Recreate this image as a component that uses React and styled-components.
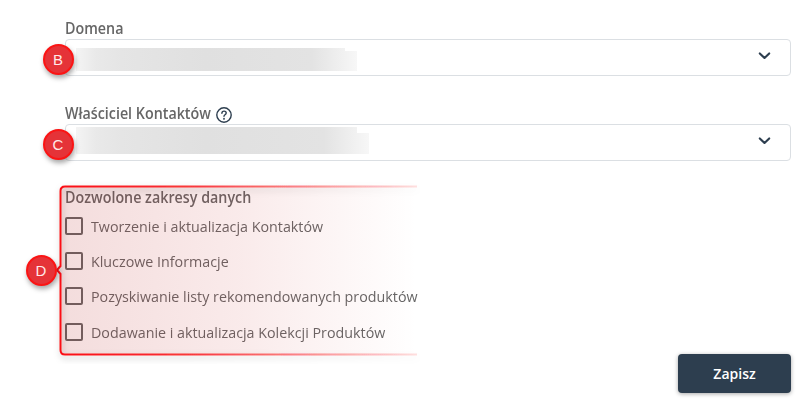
import React from 'react';
import styled, {createGlobalStyle} from 'styled-components'

const GlobalStyle = createGlobalStyle`
  * {
    box-sizing: border-box;
  }
  body {
    margin: 0;
    background: #fff;
    font-family: 'Open Sans', sans-serif;
    overflow: hidden;
  }
`

const Form = styled.form`
  width: 811px;
  height: 407px;
  padding: 18px 20px 0 65px;
  display: flex;
  flex-direction: column;
`

const Field = styled.div`
  height: ${props => props.height}px;
`

const Label = styled.div`
  height: 21px;
  display: flex;
  align-items: center;
  gap: 5px;
  font-size: 15.3px;
  line-height: 20px;
  font-weight: 600;
  color: #666;
  white-space: nowrap;
`

const LabelText = styled.span`
  display: block;
  width: ${props => props.width}px;
  margin-top: -1px;
  transform: scaleX(0.934);
  transform-origin: left;
`

const HelpIcon = styled.svg`
  width: 16px;
  height: 16px;
  margin-top: 2px;
`

const Select = styled.div`
  position: relative;
  width: 726px;
  height: 37px;
  border: 1px solid #dbdfe3;
  border-radius: 4px;
  display: flex;
  align-items: center;
  justify-content: space-between;
  padding-right: 19px;
`

const Masked = styled.div`
  margin-left: 10px;
  height: ${props => props.height}px;
  width: ${props => props.width}px;
  margin-top: ${props => props.shift}px;
  background: linear-gradient(90deg, #f4f4f4 0, #e9e9e9 20px, #e5e5e5 45px, #e0e0e0 130px, #e3e3e3 ${props => props.width - 45}px, #f7f7f7 100%);
  clip-path: polygon(0 0, calc(100% - 12px) 0, calc(100% - 12px) ${props => props.step}px, 100% ${props => props.step}px, 100% 100%, 0 100%);
`

const Chevron = styled.svg`
  width: 13px;
  height: 8px;
  margin-top: -3px;
`

const Marker = styled.div`
  position: absolute;
  left: ${props => props.x}px;
  top: ${props => props.y}px;
  width: 31px;
  height: 31px;
  border: 2px solid #fb1414;
  border-radius: 50%;
  background: #e53338;
  box-shadow: 1px 3px 5px rgba(0, 0, 0, 0.35);
  display: flex;
  align-items: center;
  justify-content: center;
  font-family: 'Liberation Sans', sans-serif;
  font-size: 15px;
  color: #ffe9e9;
`

const Scopes = styled.div`
  position: relative;
`

const ScopeTitle = styled(Label)`
  height: 20px;
  margin-bottom: 10px;
`

const Scope = styled.label`
  height: 18px;
  margin-bottom: 17.2px;
  display: flex;
  align-items: center;
  gap: 8px;
  font-size: 15.3px;
  color: #666;
  white-space: nowrap;
`

const ScopeText = styled.span`
  line-height: 20px;
  transform: scaleX(0.934);
  transform-origin: left;
`

const Checkbox = styled.input`
  appearance: none;
  width: 18px;
  height: 18px;
  margin: 0;
  border: 2px solid #666;
  border-radius: 2px;
`

const Callout = styled.svg`
  position: absolute;
  left: -15px;
  top: -9px;
  width: 370px;
  height: 186px;
  pointer-events: none;
`

const Save = styled.button`
  position: relative;
  align-self: flex-end;
  flex-shrink: 0;
  width: 113px;
  height: 39px;
  margin-top: -4px;
  border: 0;
  border-radius: 4px;
  background: #2d3e4f;
  box-shadow: 0 1px 4px rgba(0, 0, 0, 0.35);
  color: #fff;
  font-family: 'Open Sans', sans-serif;
  font-size: 14px;
  font-weight: 600;
`

const scopes = [
  'Tworzenie i aktualizacja Kontaktów',
  'Kluczowe Informacje',
  'Pozyskiwanie listy rekomendowanych produktów',
  'Dodawanie i aktualizacja Kolekcji Produktów',
]

function ChevronDown() {
  return (
      <Chevron viewBox="0 0 13 8" fill="none" stroke="#2d3e4f" strokeWidth="2.1" strokeLinecap="round" strokeLinejoin="round">
        <path d="M1.8 1.4 L6.5 6 L11.2 1.4"/>
      </Chevron>
  )
}

function Help() {
  return (
      <HelpIcon viewBox="0 0 16 16" fill="none" stroke="#2d3e4f" strokeWidth="1.4" strokeLinecap="round">
        <circle cx="8" cy="8" r="7.2"/>
        <path d="M5.9 6.2 C6 3.4 10.2 3.5 10.2 6.1 C10.2 7.7 8 7.8 8 9.2"/>
        <circle cx="8" cy="11.7" r="0.35"/>
      </HelpIcon>
  )
}

function Bracket() {
  return (
      <Callout viewBox="0 0 370 186">
        <defs>
          <linearGradient id="line" gradientUnits="userSpaceOnUse" x1="10" y1="0" x2="367" y2="0">
            <stop offset="0" stopColor="#fb1014"/>
            <stop offset="0.35" stopColor="#f91418" stopOpacity="0.85"/>
            <stop offset="1" stopColor="#f91418" stopOpacity="0.12"/>
          </linearGradient>
          <linearGradient id="fill" gradientUnits="userSpaceOnUse" x1="10" y1="0" x2="367" y2="0">
            <stop offset="0" stopColor="#b82828" stopOpacity="0.16"/>
            <stop offset="0.5" stopColor="#c83030" stopOpacity="0.1"/>
            <stop offset="1" stopColor="#d43030" stopOpacity="0"/>
          </linearGradient>
          <filter id="shade" x="-10%" y="-10%" width="120%" height="125%">
            <feDropShadow dx="1" dy="3" stdDeviation="3" floodColor="#000" floodOpacity="0.25"/>
          </filter>
        </defs>
        <path d="M367 8.5 H15 Q10.5 8.5 10.5 13 V88 L7 92 L10.5 96 V172 Q10.5 176.5 15 176.5 H367 Z" fill="url(#fill)"/>
        <path d="M367 8.5 H15 Q10.5 8.5 10.5 13 V88 L7 92 L10.5 96 V172 Q10.5 176.5 15 176.5 H367" fill="none" stroke="url(#line)" strokeWidth="2" filter="url(#shade)"/>
      </Callout>
  )
}

function App() {
  return (
      <Form>
        <GlobalStyle/>
        <Field height={85}>
          <Label><LabelText width={59}>Domena</LabelText></Label>
          <Select>
            <Masked width={281} height={23} step={3} shift={4}/>
            <ChevronDown/>
            <Marker x={-23.5} y={3.5}>B</Marker>
          </Select>
        </Field>
        <Field height={84}>
          <Label><LabelText width={146}>Właściciel Kontaktów</LabelText><Help/></Label>
          <Select>
            <Masked width={293} height={27} step={6} shift={-4}/>
            <ChevronDown/>
            <Marker x={-23.5} y={3.5}>C</Marker>
          </Select>
        </Field>
        <Scopes>
          <ScopeTitle><LabelText width={186}>Dozwolone zakresy danych</LabelText></ScopeTitle>
          {scopes.map(text => {
            return (
                <Scope key={text}>
                  <Checkbox type="checkbox"/>
                  <ScopeText>{text}</ScopeText>
                </Scope>
            )
          })}
          <Bracket/>
          <Marker x={-39.5} y={67.5}>D</Marker>
        </Scopes>
        <Save type="button">Zapisz</Save>
      </Form>
  )
}

export default App
